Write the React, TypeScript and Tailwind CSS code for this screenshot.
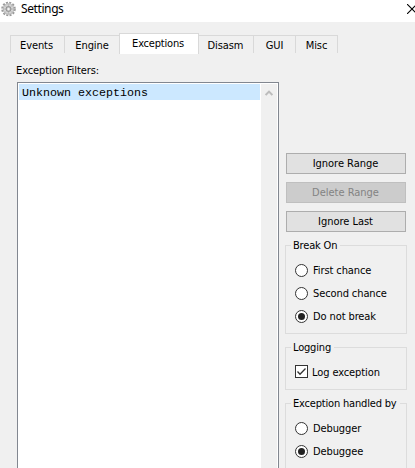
import type { ReactNode } from 'react';

function Gear() {
  return (
    <svg className="mt-[1px] ml-px shrink-0" width="15" height="16" viewBox="0 0 16 16">
      <circle cx="8" cy="8" r="6.9" fill="none" stroke="#999" strokeWidth="1.7" strokeDasharray="2.2 1.41" />
      <circle cx="8" cy="8" r="5.7" fill="#d4d4d4" stroke="#a0a0a0" strokeWidth="0.8" />
      <path d="M8 2.8v10.4M2.8 8h10.4M4.3 4.3l7.4 7.4M11.7 4.3l-7.4 7.4" stroke="#adadad" strokeWidth="0.7" />
      <circle cx="8" cy="8" r="2.6" fill="#c8c8c8" stroke="#8c8c8c" strokeWidth="1" />
      <circle cx="8" cy="8" r="1.2" fill="#f5f5f5" />
    </svg>
  );
}

function Tab({ className, children }: { className: string; children: string }) {
  return (
    <div className={`mt-[2px] h-[18px] border-t border-[#d9d9d9] pt-[3px] text-center ${className}`}>
      {children}
    </div>
  );
}

function Button({ children, disabled }: { children: string; disabled?: boolean }) {
  return (
    <button
      disabled={disabled}
      className={`h-[21px] w-[120px] border pr-px text-center leading-[19px] tracking-[-0.02px] ${
        disabled ? 'border-[#bfbfbf] bg-[#cccccc] text-[#838383]' : 'border-[#adadad] bg-[#e1e1e1]'
      }`}
    >
      {children}
    </button>
  );
}

function Group({ title, className, children }: { title: string; className: string; children: ReactNode }) {
  return (
    <section className={`w-[122px] shrink-0 border border-[#dcdcdc] ${className}`}>
      <h2 className="-mt-[7px] ml-[5px] w-fit bg-[#f0f0f0] pr-[3px] pl-[2px] tracking-[-0.18px]">{title}</h2>
      {children}
    </section>
  );
}

function Radio({ label, checked }: { label: string; checked?: boolean }) {
  return (
    <div className="flex h-[23px] items-center gap-[5px] pl-[9px]">
      <span className="flex size-[13px] items-center justify-center rounded-full border border-[#333] bg-white">
        {checked && <span className="size-[7px] rounded-full bg-[#222]" />}
      </span>
      <span className="pt-px">{label}</span>
    </div>
  );
}

export default function App() {
  return (
    <div className="flex h-[468px] w-[415px] flex-col overflow-hidden bg-[#f0f0f0] font-['DejaVu_Sans_Condensed','DejaVu_Sans',sans-serif] text-[11px] leading-[14px] font-[stretch:condensed] tracking-[-0.1px] whitespace-nowrap text-black">
      <header className="flex h-[22px] shrink-0 bg-white">
        <Gear />
        <span className="ml-[5px] font-['Noto_Sans',sans-serif] text-[12px] leading-[18px] tracking-[-0.4px]">Settings</span>
        <svg className="mt-[4px] ml-auto shrink-0" width="8" height="10" viewBox="0 0 8 10">
          <path d="M0 0l10 10M0 10L10 0" stroke="#000" strokeWidth="1.1" />
        </svg>
      </header>
      <nav className="mt-[11px] ml-[10px] flex h-[21px] shrink-0">
        <Tab className="w-[55px] border-x pr-[2px]">Events</Tab>
        <Tab className="w-[54px]">Engine</Tab>
        <div className="h-[21px] w-[80px] border border-b-0 border-[#d9d9d9] bg-white pt-[3px] pr-[2px] text-center tracking-[-0.2px]">
          Exceptions
        </div>
        <Tab className="w-[55px] border-r pr-px">Disasm</Tab>
        <Tab className="w-[42px] border-r">GUI</Tab>
        <Tab className="w-[42px] border-r">Misc</Tab>
      </nav>
      <div className="mt-[10px] ml-[16px] h-[18px] shrink-0">Exception Filters:</div>
      <main className="flex min-h-0 flex-1 pl-[17px]">
        <div className="flex w-[262px] border border-b-0 border-[#828790] bg-white pt-px pl-px">
          <div className="h-[16px] w-[241px] bg-[#cce8ff] pl-[3px] font-['Liberation_Mono',monospace] text-[11.67px] leading-[18px] tracking-normal">
            Unknown exceptions
          </div>
          <div className="ml-px flex w-[16px] justify-center bg-[#f0f0f0] pt-[6px]">
            <svg width="8" height="6" viewBox="0 0 8 6">
              <path d="M0.6 5L4 1.6L7.4 5" fill="none" stroke="#bcbcbc" strokeWidth="2" />
            </svg>
          </div>
        </div>
        <aside className="flex w-[130px] flex-col pt-[71px] pl-[6px]">
          <div className="ml-px flex flex-col gap-[8px]">
            <Button>Ignore Range</Button>
            <Button disabled>Delete Range</Button>
            <Button>Ignore Last</Button>
          </div>
          <Group title="Break On" className="mt-[13px] h-[89px]">
            <div className="pt-[6px]">
              <Radio label="First chance" />
              <Radio label="Second chance" />
              <Radio label="Do not break" checked />
            </div>
          </Group>
          <Group title="Logging" className="mt-[13px] h-[43px]">
            <div className="flex items-center gap-[4px] pt-[10px] pl-[9px]">
              <svg width="13" height="13" viewBox="0 0 13 13">
                <rect x="0.5" y="0.5" width="12" height="12" fill="#fff" stroke="#333" />
                <path d="M2.5 6.5L5 9.2L10.5 3.5" fill="none" stroke="#333" strokeWidth="1.3" />
              </svg>
              <span className="-mb-[2px]">Log exception</span>
            </div>
          </Group>
          <Group title="Exception handled by" className="mt-[13px] h-[80px]">
            <div className="pt-[6px]">
              <Radio label="Debugger" />
              <Radio label="Debuggee" checked />
            </div>
          </Group>
        </aside>
      </main>
    </div>
  );
}
